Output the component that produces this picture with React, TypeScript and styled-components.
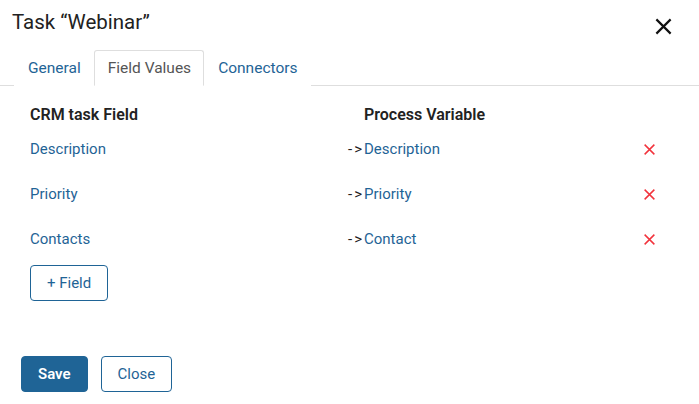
import React from "react";
import styled, { createGlobalStyle } from "styled-components";

const Global = createGlobalStyle`
  html, body { margin: 0; padding: 0; background: #fff; }
  body { font-family: Roboto, "Noto Sans", sans-serif; color: #333; font-variant-ligatures: none; font-feature-settings: "calt" 0, "liga" 0; }
  * { box-sizing: border-box; }
`;

const Dialog = styled.div`
  width: 699px;
  height: 404px;
  background: #fff;
  display: flex;
  flex-direction: column;
`;

const Header = styled.div`
  display: flex;
  align-items: center;
  justify-content: space-between;
  padding: 2px 26px 0 12px;
  height: 42px;
`;

const Title = styled.h1`
  margin: 0;
  font-size: 20.5px;
  font-weight: 400;
  color: #222;
  line-height: 36px;
`;

const CloseIcon = styled.button`
  border: 0;
  background: none;
  padding: 0;
  width: 20px;
  height: 20px;
  display: flex;
  align-items: center;
  justify-content: center;
  cursor: pointer;
  margin-top: 9px;
`;

const Tabs = styled.div`
  display: flex;
  align-items: flex-end;
  border-bottom: 1px solid #dedede;
  padding-left: 14px;
  height: 86px;
  margin-top: -42px;
  padding-top: 50px;
`;

const Tab = styled.div<{ $active?: boolean }>`
  height: 36px;
  padding: 0 12px 0 13px;
  display: flex;
  align-items: center;
  font-size: 15.5px;
  color: ${(p) => (p.$active ? "#555" : "#1f6496")};
  border: 1px solid ${(p) => (p.$active ? "#dedede" : "transparent")};
  border-bottom: ${(p) => (p.$active ? "1px solid #fff" : "1px solid transparent")};
  border-radius: 3px 3px 0 0;
  margin-bottom: -1px;
  background: #fff;
`;

const Body = styled.div`
  padding: 18px 30px 0 30px;
  display: flex;
  flex-direction: column;
`;

const Grid = styled.div`
  display: grid;
  grid-template-columns: 314px 20px 1fr 26px;
  align-items: center;
`;

const HeadCell = styled.div<{ $span?: number }>`
  font-size: 16px;
  font-weight: 600;
  color: #222;
  height: 23px;
  line-height: 22px;
  grid-column: span ${(p) => p.$span ?? 1};
`;

const Link = styled.a`
  font-size: 15px;
  color: #1f6496;
  text-decoration: none;
  height: 45px;
  line-height: 45px;
  display: block;
`;

const Arrow = styled.span`
  font-size: 15px;
  color: #222;
  line-height: 45px;
  text-align: right;
  letter-spacing: 2px;
  padding-right: 0;
  white-space: nowrap;
`;

const Remove = styled.div`
  display: flex;
  align-items: center;
  justify-content: flex-start;
  height: 45px;
`;

const Button = styled.button<{ $primary?: boolean }>`
  font-family: inherit;
  font-size: 15px;
  height: 36px;
  padding: 0 16px;
  border-radius: 4px;
  border: 1px solid #1f6496;
  background: ${(p) => (p.$primary ? "#1f6496" : "#fff")};
  color: ${(p) => (p.$primary ? "#fff" : "#1f6496")};
  font-weight: ${(p) => (p.$primary ? 600 : 400)};
  cursor: pointer;
`;

const AddRow = styled.div`
  margin-top: 3px;
  display: flex;
`;

const Footer = styled.div`
  display: flex;
  gap: 13px;
  padding: 55px 21px 0 21px;
`;

const rows = [
  ["Description", "Description"],
  ["Priority", "Priority"],
  ["Contacts", "Contact"],
];

const XIcon = ({ size, color, w }: { size: number; color: string; w: number }) => (
  <svg width={size} height={size} viewBox="0 0 16 16">
    <path d="M2 2L14 14M14 2L2 14" stroke={color} strokeWidth={w} />
  </svg>
);

export default function App() {
  return (
    <>
      <Global />
      <Dialog>
        <Header>
          <Title>Task “Webinar”</Title>
          <CloseIcon aria-label="close">
            <XIcon size={19} color="#111" w={1.8} />
          </CloseIcon>
        </Header>
        <Tabs>
          <Tab>General</Tab>
          <Tab $active>Field Values</Tab>
          <Tab>Connectors</Tab>
        </Tabs>
        <Body>
          <Grid>
            <HeadCell $span={2}>CRM task Field</HeadCell>
            <HeadCell $span={2}>Process Variable</HeadCell>
            {rows.map(([a, b]) => (
              <React.Fragment key={a}>
                <Link>{a}</Link>
                <Arrow>-&gt;</Arrow>
                <Link>{b}</Link>
                <Remove>
                  <XIcon size={13} color="#f2333c" w={1.8} />
                </Remove>
              </React.Fragment>
            ))}
          </Grid>
          <AddRow>
            <Button>+ Field</Button>
          </AddRow>
        </Body>
        <Footer>
          <Button $primary>Save</Button>
          <Button>Close</Button>
        </Footer>
      </Dialog>
    </>
  );
}
